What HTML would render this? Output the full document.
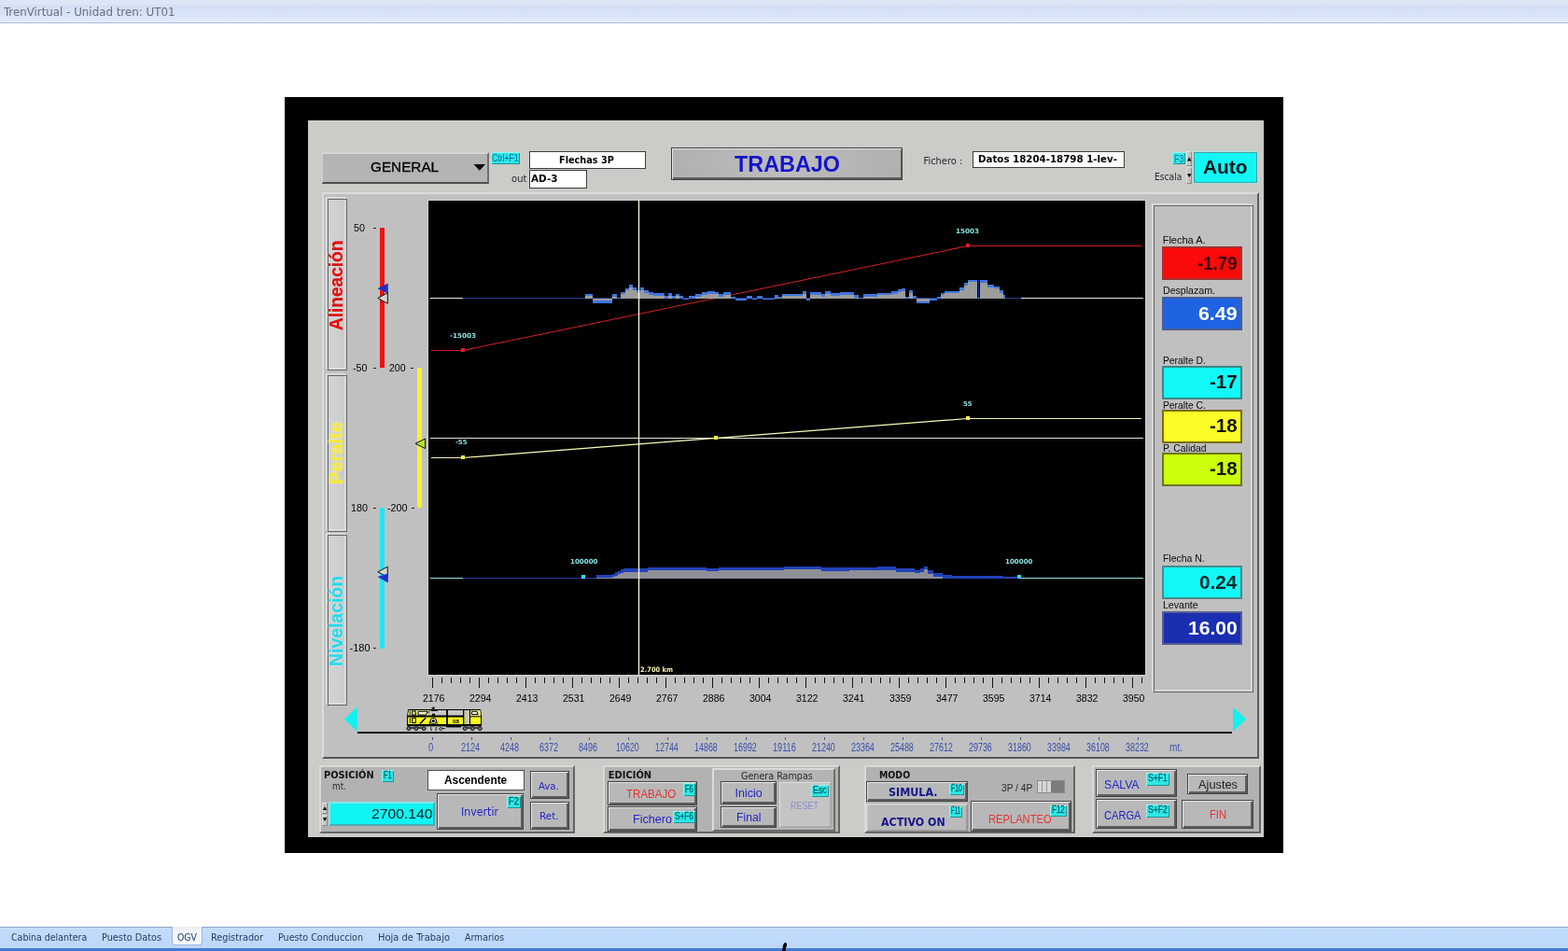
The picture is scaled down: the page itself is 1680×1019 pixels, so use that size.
<!DOCTYPE html>
<html lang="es">
<head>
<meta charset="utf-8">
<title>TrenVirtual - Unidad tren: UT01</title>
<style>
*{box-sizing:border-box;margin:0;padding:0}
html,body{width:1680px;height:1019px;overflow:hidden;background:#fff}
body{position:relative;font-family:"Liberation Sans",sans-serif;font-size:12px;color:#000}
#root{position:absolute;left:0;top:0;width:1680px;height:1019px;will-change:transform}
.a{position:absolute}
.t{position:absolute;white-space:nowrap;line-height:1;transform-origin:0 50%}
#titlebar{left:0;top:0;width:1680px;height:25px;background:linear-gradient(#dbe5f5 0,#dde7f6 18%,#d3e0f4 24%,#d6e2f5 60%,#e2ebfa 92%,#e6eefb 100%);border-bottom:1px solid #a9bde2}
#taskbar{left:0;top:993px;width:1680px;height:26px;background:linear-gradient(#c3dcfd,#bcd7fa);border-top:1px solid #8da6c9;border-bottom:3px solid #427bd4}
#blk{left:305px;top:104px;width:1070px;height:810px;background:#000}
#panel{left:330px;top:129px;width:1024px;height:768px;background:#c9ccc7}
#frame{left:345px;top:206px;width:1004px;height:607px;background:#c0c0c0;border-top:2px solid #dadeda;border-left:2px solid #dadeda;border-right:2px solid #5c5e5a;border-bottom:2px solid #565856}
#chart{left:459px;top:215px;width:768px;height:508px;background:#000;overflow:hidden;box-shadow:0 0 0 1px #d2d2d2}
.btn{position:absolute;background:#b8b8b8;border:1px solid #444;box-shadow:inset 1px 1px 0 #e6e6e6,inset -2px -2px 0 #5e5e5e}
.grp{position:absolute;background:#b2b2b2;border-top:2px solid #d8dad8;border-left:2px solid #d8dad8;border-right:2px solid #646664;border-bottom:2px solid #646664}
.tag{position:absolute;background:#2ee8e4;box-shadow:inset 1px 1px 0 #96f2f2,inset -1px -1px 0 #22939a}
.wbox{position:absolute;background:#fff;border:1px solid #3c3c3c}
.vt{position:absolute;white-space:nowrap;line-height:1;font-weight:bold;transform-origin:0 0;-webkit-text-stroke:0.35px currentColor;text-shadow:0 0 2px rgba(255,255,255,.75),0 0 1px rgba(255,255,255,.6)}
</style>
</head>
<body>
<div id="root">
<div class="a" id="titlebar"></div>
<span class="t" style="left:4px;top:6.3px;font-size:13px;font-family:'DejaVu Sans Condensed','Liberation Sans',sans-serif;color:#6a707c;transform:scaleX(1.013);">TrenVirtual - Unidad tren: UT01</span>
<div class="a" id="blk"></div>
<div class="a" id="panel"></div>
<div class="a" id="frame"></div>
<div class="a" id="chart"></div>
<div class="a" id="taskbar"></div>
<div class="a" style="left:184px;top:993px;width:33px;height:20px;background:linear-gradient(#ebebeb,#f4f7fc 30%,#f7faff);border:1px solid #9fb6d8;border-top:none;border-radius:0 0 4px 4px"></div>
<span class="t" style="left:12px;top:999.12px;font-size:10.5px;font-family:'DejaVu Sans Condensed','Liberation Sans',sans-serif;color:#1e3a5f;">Cabina delantera</span>
<span class="t" style="left:109px;top:999.12px;font-size:10.5px;font-family:'DejaVu Sans Condensed','Liberation Sans',sans-serif;color:#1e3a5f;transform:scaleX(1.029);">Puesto Datos</span>
<span class="t" style="left:190px;top:999.12px;font-size:10.5px;font-family:'DejaVu Sans Condensed','Liberation Sans',sans-serif;color:#1e3a5f;transform:scaleX(0.990);">OGV</span>
<span class="t" style="left:226px;top:999.12px;font-size:10.5px;font-family:'DejaVu Sans Condensed','Liberation Sans',sans-serif;color:#1e3a5f;transform:scaleX(1.028);">Registrador</span>
<span class="t" style="left:298px;top:999.12px;font-size:10.5px;font-family:'DejaVu Sans Condensed','Liberation Sans',sans-serif;color:#1e3a5f;transform:scaleX(1.013);">Puesto Conduccion</span>
<span class="t" style="left:405px;top:999.12px;font-size:10.5px;font-family:'DejaVu Sans Condensed','Liberation Sans',sans-serif;color:#1e3a5f;transform:scaleX(1.052);">Hoja de Trabajo</span>
<span class="t" style="left:498px;top:999.12px;font-size:10.5px;font-family:'DejaVu Sans Condensed','Liberation Sans',sans-serif;color:#1e3a5f;transform:scaleX(0.992);">Armarios</span>
<div class="a" style="left:345px;top:162.5px;width:179px;height:34.5px;background:#b4b4b4;border-top:2px solid #d6d8d6;border-left:1px solid #d0d2d0;border-right:2px solid #707070;border-bottom:2px solid #4e4e4e"></div>
<span class="t" style="left:397px;top:171.35px;font-size:15.3px;-webkit-text-stroke:0.3px #000;">GENERAL</span>
<svg class="a" style="left:506px;top:175px" width="16" height="9" viewBox="0 0 16 9"><path d="M1.5 1h12.5l-6.2 6.8z" fill="#000"/></svg>
<div class="tag" style="left:526px;top:163px;width:31px;height:13px;"></div>
<span class="t" style="left:527.3px;top:164.29px;font-size:11px;color:#0c64a8;transform:scaleX(0.786);">Ctrl+F1</span>
<div class="wbox" style="left:567px;top:162px;width:125px;height:19px;"></div>
<span class="t" style="left:599.3px;top:165.99px;font-size:11px;font-family:'DejaVu Sans Condensed','Liberation Sans',sans-serif;font-weight:bold;transform:scaleX(0.981);">Flechas 3P</span>
<span class="t" style="left:547.5px;top:185.69px;font-size:11px;font-family:'DejaVu Sans Condensed','Liberation Sans',sans-serif;color:#2a2a2a;transform:scaleX(1.017);">out</span>
<div class="wbox" style="left:567px;top:182px;width:62px;height:20px;"></div>
<span class="t" style="left:569px;top:186.19px;font-size:11px;font-family:'DejaVu Sans Condensed','Liberation Sans',sans-serif;font-weight:bold;transform:scaleX(1.053);">AD-3</span>
<div class="a" style="left:719px;top:158px;width:248px;height:35px;background:linear-gradient(90deg,#b0b0b0,#bdbdbd 50%,#b0b0b0);border:1px solid #3e3e3e;box-shadow:inset 1px 1px 0 #e8e8e8,inset -1px -2px 0 #606060"></div>
<span class="t" style="left:786.5px;top:163.56px;font-size:24.5px;font-weight:bold;color:#1414cc;transform:scaleX(0.954);">TRABAJO</span>
<span class="t" style="left:989.5px;top:166.69px;font-size:11px;font-family:'DejaVu Sans Condensed','Liberation Sans',sans-serif;color:#2a2a2a;">Fichero :</span>
<div class="wbox" style="left:1042px;top:162px;width:163px;height:18px;"></div>
<span class="t" style="left:1047.5px;top:165.19px;font-size:11px;font-family:'DejaVu Sans Condensed','Liberation Sans',sans-serif;font-weight:bold;transform:scaleX(1.036);">Datos 18204-18798 1-lev-</span>
<div class="tag" style="left:1256px;top:163px;width:14px;height:13px;"></div>
<span class="t" style="left:1257.6px;top:164.71px;font-size:10.5px;color:#1472b0;transform:scaleX(0.864);">F3</span>
<span class="t" style="left:1236.9px;top:183.69px;font-size:11px;font-family:'DejaVu Sans Condensed','Liberation Sans',sans-serif;color:#2a2a2a;transform:scaleX(0.926);">Escala</span>
<div class="a" style="left:1271px;top:162px;width:6px;height:16px;background:#c4c4c4;border:1px solid #8a8a8a;border-top-color:#e0e0e0;border-left-color:#e0e0e0"></div>
<div class="a" style="left:1271px;top:179px;width:6px;height:18px;background:#c4c4c4;border:1px solid #8a8a8a;border-top-color:#e0e0e0;border-left-color:#e0e0e0"></div>
<svg class="a" style="left:1271px;top:162px" width="7" height="35" viewBox="0 0 7 35"><path d="M0.9 10.4h4.6l-2.3-4.2z M0.9 24.2h4.6l-2.3 3.8z" fill="#000"/></svg>
<div class="a" style="left:1278px;top:162px;width:70px;height:35px;background:#12f6f6;box-shadow:inset 0 0 0 1px #a4e2e2,inset 0 0 0 2px #4a9ea0"></div>
<span class="t" style="left:1288.7px;top:168.8px;font-size:20.2px;font-weight:bold;color:#04181c;transform:scaleX(1.035);">Auto</span>
<div class="a" style="left:351px;top:213px;width:21px;height:184px;background:linear-gradient(90deg,#d4d4d4,#cacaca)"></div>
<div class="a" style="left:349px;top:211px;width:21px;height:184px;border:1px solid #e0e0e0"></div>
<div class="a" style="left:350px;top:212px;width:21px;height:184px;border:1px solid rgba(226,226,226,.45)"></div>
<div class="a" style="left:351px;top:213px;width:21px;height:184px;border:1px solid #666"></div>
<div class="a" style="left:351px;top:402px;width:21px;height:168px;background:linear-gradient(90deg,#d4d4d4,#cacaca)"></div>
<div class="a" style="left:349px;top:400px;width:21px;height:168px;border:1px solid #e0e0e0"></div>
<div class="a" style="left:350px;top:401px;width:21px;height:168px;border:1px solid rgba(226,226,226,.45)"></div>
<div class="a" style="left:351px;top:402px;width:21px;height:168px;border:1px solid #666"></div>
<div class="a" style="left:351px;top:573px;width:21px;height:183px;background:linear-gradient(90deg,#d4d4d4,#cacaca)"></div>
<div class="a" style="left:349px;top:571px;width:21px;height:183px;border:1px solid #e0e0e0"></div>
<div class="a" style="left:350px;top:572px;width:21px;height:183px;border:1px solid rgba(226,226,226,.45)"></div>
<div class="a" style="left:351px;top:573px;width:21px;height:183px;border:1px solid #666"></div>
<span class="vt" style="left:350.3px;top:354.3px;font-size:20px;color:#dc1212;transform:rotate(-90deg) scaleX(0.952)">Alineación</span>
<span class="vt" style="left:350.3px;top:519.3px;font-size:20px;color:#f4e83c;transform:rotate(-90deg) scaleX(1.001)">Peralte</span>
<span class="vt" style="left:350.3px;top:714.3px;font-size:20px;color:#2cd8ea;transform:rotate(-90deg) scaleX(0.970)">Nivelación</span>
<span class="t" style="left:379.4px;top:238.69px;font-size:11px;transform:scaleX(0.980);">50</span>
<span class="t" style="left:377.5px;top:388.69px;font-size:11px;transform:scaleX(0.974);">-50</span>
<span class="t" style="left:416.75px;top:388.69px;font-size:11px;transform:scaleX(0.959);">200</span>
<span class="t" style="left:376.2px;top:538.69px;font-size:11px;transform:scaleX(0.980);">180</span>
<span class="t" style="left:414.5px;top:538.69px;font-size:11px;transform:scaleX(0.976);">-200</span>
<span class="t" style="left:374.5px;top:688.69px;font-size:11px;">-180</span>
<div class="a" style="left:400px;top:244px;width:3px;height:1px;background:#222"></div>
<div class="a" style="left:400px;top:394px;width:3px;height:1px;background:#222"></div>
<div class="a" style="left:440px;top:394px;width:3px;height:1px;background:#222"></div>
<div class="a" style="left:400px;top:544px;width:3px;height:1px;background:#222"></div>
<div class="a" style="left:440.5px;top:544px;width:3px;height:1px;background:#222"></div>
<div class="a" style="left:400px;top:694px;width:3px;height:1px;background:#222"></div>
<div class="a" style="left:407px;top:244px;width:5px;height:150px;background:#ee1212"></div>
<div class="a" style="left:446.5px;top:394px;width:5.5px;height:150px;background:#f6f230"></div>
<div class="a" style="left:407px;top:544px;width:5px;height:151px;background:#1fe6f6"></div>
<svg class="a" style="left:400px;top:300px" width="60" height="330" viewBox="400 300 60 330"><path d="M404.5 309.3L415.8 303.6V314.6z" fill="#1f30c8"/><path d="M404.8 319.5L415.3 313.8V325.2z" fill="#d4d4d4" stroke="#111" stroke-width="1"/><path d="M445 475.3L455.7 470V480.6z" fill="#b4e03a" stroke="#111" stroke-width="1"/><path d="M404.8 612.8L415.3 607.2V618.4z" fill="#d4d4d4" stroke="#111" stroke-width="1"/><path d="M404.5 618L415.8 614.5V624.5z" fill="#1f30c8"/></svg>
<svg class="a" style="left:459px;top:215px" width="768" height="508" viewBox="459 215 768 508" shape-rendering="crispEdges"><path d="M496 375.5L1037 263.5" fill="none" stroke="#d82222" stroke-width="1.05" shape-rendering="auto"/><path d="M462 375.5H496M1037 263.5H1223" fill="none" stroke="#d81818" stroke-width="1"/><path d="M461 319.5H496" stroke="#e6e6e0" stroke-width="1"/><path d="M496 319.5H1094" stroke="#2a3c96" stroke-width="1"/><path d="M1094 319.5H1225" stroke="#e6e6e0" stroke-width="1"/><path d="M627 319.5V314.5H635V324.5H656V315H661V318.5H665V312.5H670V308.5H674V305H678V308H682V311H686V308H690V311H695V313H700V314H712V317H716V314H720V317H724V314.5H728V317H732V321H738V317H745V315H752V313H758V312H766V312.5H770V315H775V313H783V318H788V321.5H800V317H806V320.5H811V317H817V321H830V316H834V318H838V314.5H860V312H864V322H868V313H880V315H884V312H890V314H900V313H915V316H920V319H925V315H940V313.5H955V312H962V310H966V309H970V318H974V311H978V317H982V325H996V321.5H1004V317.5H1008V313.5H1012V311.5H1028V308H1033V303H1037V299.5H1047V319H1050V300H1058V305H1065V306.5H1071V311H1075V316H1077V319.5Z" fill="#4076de"/><path d="M627 319.5V317.0H635V322.0H656V317.5H661V319.5H665V315.0H670V311.0H674V307.5H678V310.5H682V313.5H686V310.5H690V313.5H695V315.5H700V316.5H712V319.5H716V316.5H720V319.5H724V317.0H728V319.5H732V319.5H738V319.5H745V317.5H752V315.5H758V314.5H766V315.0H770V317.5H775V315.5H783V319.5H788V319.5H800V319.5H806V319.5H811V319.5H817V319.5H830V318.5H834V319.5H838V317.0H860V314.5H864V319.5H868V315.5H880V317.5H884V314.5H890V316.5H900V315.5H915V318.5H920V319.5H925V317.5H940V316.0H955V314.5H962V312.5H966V311.5H970V319.5H974V313.5H978V319.5H982V322.5H996V319.5H1004V319.5H1008V316.0H1012V314.0H1028V310.5H1033V305.5H1037V302.0H1047V319.5H1050V302.5H1058V307.5H1065V309.0H1071V313.5H1075V318.5H1077V319.5Z" fill="#9c9c9c"/><path d="M1048.5 300V319" stroke="#1c3aa0" stroke-width="1"/><rect x="494" y="373" width="4" height="4" fill="#e01c2c"/><rect x="1035" y="261" width="4" height="4" fill="#e01c2c"/><path d="M461 469.5H1225" stroke="#e8e8dc" stroke-width="1"/><path d="M496 490.5L1037 448.5" fill="none" stroke="#fcfcb8" stroke-width="1.25" shape-rendering="auto"/><path d="M462 490.5H496M1037 448.5H1223" fill="none" stroke="#f6f6b0" stroke-width="1"/><rect x="494" y="488" width="4" height="4" fill="#f0f040"/><rect x="765" y="467" width="4" height="4" fill="#f0f040"/><rect x="1035" y="446" width="4" height="4" fill="#f0f060"/><path d="M461 619.5H496" stroke="#8ee6e6" stroke-width="1"/><path d="M496 619.5H1092" stroke="#2338a8" stroke-width="1"/><path d="M1092 619.5H1225" stroke="#8ee6e6" stroke-width="1"/><path d="M625 620V618.5H639V615.8H656V614.5H659V613H662V611.5H665V610.3H668V609H672V609.4H694V607.6H720V607.8H757V608.6H770V607.6H800V607.8H840V606.8H880V608H910V607.6H940V607H960V609H980V610.8H986V609.4H990V606.6H994V611.4H1000V614.4H1010V616H1020V616.6H1075V618.4H1092V620Z" fill="#2242b8"/><path d="M625 619.5V619.5H639V619.4H656V618.1H659V616.6H662V615.1H665V613.9H668V612.6H672V613.0H694V611.2H720V611.4H757V612.2H770V611.2H800V611.4H840V610.4H880V611.6H910V611.2H940V610.6H960V612.6H980V614.4H986V613.0H990V610.2H994V615.0H1000V618.0H1010V619.5H1020V619.5H1075V619.5H1092V619.5Z" fill="#8e8e96"/><rect x="623" y="616" width="4" height="4" fill="#40d8f0"/><rect x="1090" y="616" width="4" height="4" fill="#30d8e8"/><path d="M684.5 215V723" stroke="#fbfbe6" stroke-width="1.3" shape-rendering="auto"/></svg>
<span class="t" style="left:481.5px;top:357.08px;font-size:7px;font-family:'DejaVu Sans','Liberation Sans',sans-serif;font-weight:bold;color:#8ce0e0;transform:scaleX(1.027);">-15003</span>
<span class="t" style="left:1024px;top:244.68px;font-size:7px;font-family:'DejaVu Sans','Liberation Sans',sans-serif;font-weight:bold;color:#8ce0e0;transform:scaleX(1.026);">15003</span>
<span class="t" style="left:488.25px;top:471.08px;font-size:7px;font-family:'DejaVu Sans','Liberation Sans',sans-serif;font-weight:bold;color:#8ce0e0;transform:scaleX(0.988);">-55</span>
<span class="t" style="left:1031.75px;top:430.08px;font-size:7px;font-family:'DejaVu Sans','Liberation Sans',sans-serif;font-weight:bold;color:#8ce0e0;transform:scaleX(0.974);">55</span>
<span class="t" style="left:610.75px;top:598.58px;font-size:7px;font-family:'DejaVu Sans','Liberation Sans',sans-serif;font-weight:bold;color:#8ce0e0;transform:scaleX(1.009);">100000</span>
<span class="t" style="left:1076.75px;top:598.58px;font-size:7px;font-family:'DejaVu Sans','Liberation Sans',sans-serif;font-weight:bold;color:#8ce0e0;transform:scaleX(1.009);">100000</span>
<span class="t" style="left:686px;top:713.95px;font-size:7.5px;font-family:'DejaVu Sans','Liberation Sans',sans-serif;font-weight:bold;color:#f2f0b0;transform:scaleX(0.894);">2.700 km</span>
<div class="a" style="left:463px;top:726px;width:751px;height:11px;background:repeating-linear-gradient(90deg,#111 0,#111 1px,transparent 1px,transparent 50px)"></div>
<div class="a" style="left:463px;top:726px;width:761px;height:6px;background:repeating-linear-gradient(90deg,#111 0,#111 1px,transparent 1px,transparent 10px)"></div>
<span class="t" style="left:452.75px;top:742.69px;font-size:11px;transform:scaleX(0.960);">2176</span>
<span class="t" style="left:502.75px;top:742.69px;font-size:11px;transform:scaleX(0.960);">2294</span>
<span class="t" style="left:552.75px;top:742.69px;font-size:11px;transform:scaleX(0.960);">2413</span>
<span class="t" style="left:602.75px;top:742.69px;font-size:11px;transform:scaleX(0.960);">2531</span>
<span class="t" style="left:652.75px;top:742.69px;font-size:11px;transform:scaleX(0.960);">2649</span>
<span class="t" style="left:702.75px;top:742.69px;font-size:11px;transform:scaleX(0.960);">2767</span>
<span class="t" style="left:752.75px;top:742.69px;font-size:11px;transform:scaleX(0.960);">2886</span>
<span class="t" style="left:802.75px;top:742.69px;font-size:11px;transform:scaleX(0.960);">3004</span>
<span class="t" style="left:852.75px;top:742.69px;font-size:11px;transform:scaleX(0.960);">3122</span>
<span class="t" style="left:902.75px;top:742.69px;font-size:11px;transform:scaleX(0.960);">3241</span>
<span class="t" style="left:952.75px;top:742.69px;font-size:11px;transform:scaleX(0.960);">3359</span>
<span class="t" style="left:1002.75px;top:742.69px;font-size:11px;transform:scaleX(0.960);">3477</span>
<span class="t" style="left:1052.75px;top:742.69px;font-size:11px;transform:scaleX(0.960);">3595</span>
<span class="t" style="left:1102.75px;top:742.69px;font-size:11px;transform:scaleX(0.960);">3714</span>
<span class="t" style="left:1152.75px;top:742.69px;font-size:11px;transform:scaleX(0.960);">3832</span>
<span class="t" style="left:1202.75px;top:742.69px;font-size:11px;transform:scaleX(0.960);">3950</span>
<svg class="a" style="left:434px;top:756px" width="84" height="28" viewBox="434 756 84 28"><path d="M437.6 760.5H514.6L515.6 767.5V776.5H436.6V767.5z" fill="#f8f820" stroke="#000" stroke-width="1"/><path d="M438 761H459.5V767H437.2zM504 761H514.3L515 767H504z" fill="#ecec9c"/><rect x="459.5" y="761" width="19" height="6.2" fill="#c6c6c6"/><rect x="480" y="761" width="16.5" height="6.2" fill="#c6c6c6"/><rect x="497.5" y="761" width="5.7" height="15.3" fill="#c6c6c6"/><path d="M436.6 767.5H497" stroke="#000" stroke-width="1.8"/><path d="M503.5 767.8H515.6" stroke="#000" stroke-width="1"/><path d="M479 760V778" stroke="#000" stroke-width="1.8"/><path d="M496.7 760.5V776.5" stroke="#000" stroke-width="1.3"/><path d="M503.5 760.5V776.5" stroke="#000" stroke-width="1"/><rect x="441.7" y="762" width="3.6" height="4" fill="#ecec9c" stroke="#000" stroke-width="1"/><rect x="441.7" y="769.3" width="3.6" height="5.2" fill="#f8f820" stroke="#000" stroke-width="1"/><path d="M439.3 761.5V766.5M439.3 769.3V775" stroke="#000" stroke-width="0.9"/><path d="M448 762.3H458.3L456.3 766H448z" fill="#f4f4d0" stroke="#000" stroke-width="1"/><path d="M458.6 764.6L460.6 761.6" stroke="#000" stroke-width="0.9"/><path d="M505.4 762.3H511L512.2 765.6H505.4z" fill="#f4f4d0" stroke="#000" stroke-width="1"/><path d="M450 775.6L456 769.2" stroke="#000" stroke-width="1.5"/><path d="M462 760.6H468.8V762H462zM462.4 758.2H466V759.3H462.4zM463.6 757.6H464.9V761H463.6zM463 764.8H466V767.5H463z" fill="#000"/><circle cx="464.3" cy="772.5" r="3.6" fill="#000"/><circle cx="464.3" cy="772.5" r="2.7" fill="#e2e2d2"/><circle cx="464.3" cy="772.5" r="1.5" fill="#000"/><path d="M460 776L461.2 772.5M468.6 776L467.4 772.5" stroke="#000" stroke-width="0.9"/><rect x="436.2" y="776" width="79.8" height="2.3" fill="#000"/><rect x="478" y="778" width="16" height="1.4" fill="#000"/><circle cx="437.9" cy="780.6" r="1.9" fill="#7c7c84" stroke="#000" stroke-width="1"/><circle cx="445.9" cy="780.6" r="1.9" fill="#7c7c84" stroke="#000" stroke-width="1"/><circle cx="454.2" cy="780.6" r="1.9" fill="#7c7c84" stroke="#000" stroke-width="1"/><circle cx="498.2" cy="780.6" r="1.9" fill="#7c7c84" stroke="#000" stroke-width="1"/><circle cx="506.3" cy="780.6" r="1.9" fill="#7c7c84" stroke="#000" stroke-width="1"/><circle cx="514.3" cy="780.6" r="1.9" fill="#7c7c84" stroke="#000" stroke-width="1"/><path d="M439.8 780H444M447.8 780H452.4M500 780H504.4M508.2 780H512.4" stroke="#1a1a1a" stroke-width="1.6"/><circle cx="472.3" cy="781" r="1.5" fill="#bbb" stroke="#000" stroke-width="0.8"/><path d="M461.8 779V782.3H463M467.3 779V782.3H466.2M474 780.5H477" fill="none" stroke="#000" stroke-width="0.8"/><text x="485.1" y="774.7" font-family="Liberation Sans,sans-serif" font-size="5.8" font-weight="bold" textLength="6.8" lengthAdjust="spacingAndGlyphs" fill="#000">08</text></svg>
<div class="a" style="left:383px;top:784px;width:937px;height:2px;background:#000"></div>
<svg class="a" style="left:368px;top:757px" width="16" height="28" viewBox="0 0 16 28"><path d="M0.8 13.6L15 0.5V27z" fill="#14f0f0"/></svg>
<svg class="a" style="left:1320px;top:757px" width="16" height="28" viewBox="0 0 16 28"><path d="M15.2 13.6L1 0.5V27z" fill="#14f0f0"/></svg>
<div class="a" style="left:463px;top:790px;width:757px;height:2.5px;background:repeating-linear-gradient(90deg,#4a5688 0,#4a5688 1px,transparent 1px,transparent 42px)"></div>
<span class="t" style="left:459.4px;top:794.64px;font-size:12px;color:#3a50aa;transform:scaleX(0.778);">0</span>
<span class="t" style="left:494.35px;top:794.64px;font-size:12px;color:#3a50aa;transform:scaleX(0.753);">2124</span>
<span class="t" style="left:536.35px;top:794.64px;font-size:12px;color:#3a50aa;transform:scaleX(0.753);">4248</span>
<span class="t" style="left:578.35px;top:794.64px;font-size:12px;color:#3a50aa;transform:scaleX(0.753);">6372</span>
<span class="t" style="left:620.35px;top:794.64px;font-size:12px;color:#3a50aa;transform:scaleX(0.753);">8496</span>
<span class="t" style="left:660px;top:794.64px;font-size:12px;color:#3a50aa;transform:scaleX(0.743);">10620</span>
<span class="t" style="left:702px;top:794.64px;font-size:12px;color:#3a50aa;transform:scaleX(0.743);">12744</span>
<span class="t" style="left:744px;top:794.64px;font-size:12px;color:#3a50aa;transform:scaleX(0.743);">14868</span>
<span class="t" style="left:786px;top:794.64px;font-size:12px;color:#3a50aa;transform:scaleX(0.743);">16992</span>
<span class="t" style="left:828px;top:794.64px;font-size:12px;color:#3a50aa;transform:scaleX(0.763);">19116</span>
<span class="t" style="left:870px;top:794.64px;font-size:12px;color:#3a50aa;transform:scaleX(0.743);">21240</span>
<span class="t" style="left:912px;top:794.64px;font-size:12px;color:#3a50aa;transform:scaleX(0.743);">23364</span>
<span class="t" style="left:954px;top:794.64px;font-size:12px;color:#3a50aa;transform:scaleX(0.743);">25488</span>
<span class="t" style="left:996px;top:794.64px;font-size:12px;color:#3a50aa;transform:scaleX(0.743);">27612</span>
<span class="t" style="left:1038px;top:794.64px;font-size:12px;color:#3a50aa;transform:scaleX(0.743);">29736</span>
<span class="t" style="left:1080px;top:794.64px;font-size:12px;color:#3a50aa;transform:scaleX(0.743);">31860</span>
<span class="t" style="left:1122px;top:794.64px;font-size:12px;color:#3a50aa;transform:scaleX(0.743);">33984</span>
<span class="t" style="left:1164px;top:794.64px;font-size:12px;color:#3a50aa;transform:scaleX(0.743);">36108</span>
<span class="t" style="left:1206px;top:794.64px;font-size:12px;color:#3a50aa;transform:scaleX(0.743);">38232</span>
<span class="t" style="left:1253.3px;top:794.64px;font-size:12px;color:#3a50aa;transform:scaleX(0.840);">mt.</span>
<div class="a" style="left:1236px;top:220px;width:107px;height:522px;background:#c0c0c0"></div>
<div class="a" style="left:1234px;top:218px;width:107px;height:522px;border:1px solid #e0e0e0"></div>
<div class="a" style="left:1235px;top:219px;width:107px;height:522px;border:1px solid rgba(226,226,226,.45)"></div>
<div class="a" style="left:1236px;top:220px;width:107px;height:522px;border:1px solid #666"></div>
<span class="t" style="left:1245.7px;top:251.69px;font-size:11px;color:#0a0a0a;">Flecha A.</span>
<div class="a" style="left:1245px;top:264px;width:86px;height:36px;background:#fb0a0a;border:2px solid #a43232"></div>
<span class="t" style="left:1282.7px;top:272.91px;font-size:19.6px;font-weight:bold;color:#3a0404;transform:scaleX(0.954);">-1.79</span>
<span class="t" style="left:1245.7px;top:305.69px;font-size:11px;color:#0a0a0a;transform:scaleX(0.964);">Desplazam.</span>
<div class="a" style="left:1245px;top:318px;width:86px;height:36px;background:#1f62e2;border:2px solid #4a5c8e"></div>
<span class="t" style="left:1284.2px;top:326.61px;font-size:19.6px;font-weight:bold;color:#fff;transform:scaleX(1.088);">6.49</span>
<span class="t" style="left:1245.7px;top:381.49px;font-size:11px;color:#0a0a0a;transform:scaleX(0.936);">Peralte D.</span>
<div class="a" style="left:1245px;top:392px;width:86px;height:36px;background:#12f8f8;border:2px solid #3e8484"></div>
<span class="t" style="left:1295.7px;top:400.11px;font-size:19.6px;font-weight:bold;color:#0a1616;transform:scaleX(1.045);">-17</span>
<span class="t" style="left:1245.7px;top:428.69px;font-size:11px;color:#0a0a0a;transform:scaleX(0.936);">Peralte C.</span>
<div class="a" style="left:1245px;top:439px;width:86px;height:36px;background:#fcfc26;border:2px solid #7c6c18"></div>
<span class="t" style="left:1295.7px;top:447.11px;font-size:19.6px;font-weight:bold;color:#141404;transform:scaleX(1.045);">-18</span>
<span class="t" style="left:1245.7px;top:475.19px;font-size:11px;color:#0a0a0a;transform:scaleX(0.942);">P. Calidad</span>
<div class="a" style="left:1245px;top:485px;width:86px;height:36px;background:#ccff0c;border:2px solid #6c7620"></div>
<span class="t" style="left:1295.7px;top:493.21px;font-size:19.6px;font-weight:bold;color:#141404;transform:scaleX(1.045);">-18</span>
<span class="t" style="left:1245.7px;top:593.49px;font-size:11px;color:#0a0a0a;transform:scaleX(0.947);">Flecha N.</span>
<div class="a" style="left:1245px;top:606px;width:86px;height:36px;background:#12f8f8;border:2px solid #4a8a8c"></div>
<span class="t" style="left:1284.8px;top:614.71px;font-size:19.6px;font-weight:bold;color:#06282a;transform:scaleX(1.059);">0.24</span>
<span class="t" style="left:1245.7px;top:642.69px;font-size:11px;color:#0a0a0a;transform:scaleX(0.960);">Levante</span>
<div class="a" style="left:1245px;top:655px;width:86px;height:36px;background:#1a2eb2;border:2px solid #565e92"></div>
<span class="t" style="left:1272.7px;top:663.51px;font-size:19.6px;font-weight:bold;color:#fff;transform:scaleX(1.077);">16.00</span>
<div class="grp" style="left:342px;top:820px;width:274px;height:73px;"></div>
<span class="t" style="left:346.6px;top:825.29px;font-size:11px;font-family:'DejaVu Sans Condensed','Liberation Sans',sans-serif;font-weight:bold;color:#141414;transform:scaleX(0.991);">POSICIÓN</span>
<div class="tag" style="left:409px;top:825px;width:13px;height:13px;"></div>
<span class="t" style="left:410.8px;top:826.24px;font-size:10px;color:#05646e;transform:scaleX(0.754);-webkit-text-stroke:0.3px #05646e;">F1</span>
<span class="t" style="left:355.5px;top:837.39px;font-size:11px;font-family:'DejaVu Sans Condensed','Liberation Sans',sans-serif;color:#2a2a2a;transform:scaleX(0.900);">mt.</span>
<div class="wbox" style="left:458px;top:825px;width:104px;height:22px;border-color:#505050"></div>
<span class="t" style="left:476px;top:830.34px;font-size:12px;font-weight:bold;transform:scaleX(0.988);">Ascendente</span>
<div class="btn" style="left:568px;top:826px;width:42px;height:30px;"></div>
<span class="t" style="left:576.9px;top:837.19px;font-size:11px;font-family:'DejaVu Sans Condensed','Liberation Sans',sans-serif;color:#2424c4;transform:scaleX(1.029);">Ava.</span>
<div class="btn" style="left:568px;top:859px;width:42px;height:30px;"></div>
<span class="t" style="left:577.5px;top:869.09px;font-size:11px;font-family:'DejaVu Sans Condensed','Liberation Sans',sans-serif;color:#2424c4;transform:scaleX(1.056);">Ret.</span>
<div class="btn" style="left:468px;top:850px;width:93px;height:39px;"></div>
<span class="t" style="left:493.7px;top:864.12px;font-size:12.5px;font-family:'DejaVu Sans Condensed','Liberation Sans',sans-serif;color:#2424c4;transform:scaleX(0.980);">Invertir</span>
<div class="tag" style="left:543px;top:853px;width:15px;height:13px;"></div>
<span class="t" style="left:544.8px;top:854.24px;font-size:10px;color:#05646e;transform:scaleX(0.925);-webkit-text-stroke:0.3px #05646e;">F2</span>
<div class="a" style="left:345px;top:860px;width:6px;height:12px;background:#c6c6c6;border:1px solid #8a8a8a;border-top-color:#e4e4e4;border-left-color:#e4e4e4"></div>
<div class="a" style="left:345px;top:873px;width:6px;height:12px;background:#c6c6c6;border:1px solid #8a8a8a;border-top-color:#e4e4e4;border-left-color:#e4e4e4"></div>
<svg class="a" style="left:345px;top:860px" width="6" height="25" viewBox="0 0 6 25"><path d="M0.8 8h4.4l-2.2-3.8z M0.8 16.2h4.4l-2.2 3.8z" fill="#000"/></svg>
<div class="a" style="left:352px;top:859px;width:114px;height:26px;background:#10f4f4;border:2px solid #48aeb2;border-top-color:#86e4e4;border-left-color:#86e4e4"></div>
<span class="t" style="left:397.6px;top:865.14px;font-size:14.6px;color:#061c1c;transform:scaleX(1.078);">2700.140</span>
<div class="grp" style="left:646px;top:820px;width:254px;height:73px;"></div>
<span class="t" style="left:651.8px;top:825.29px;font-size:11px;font-family:'DejaVu Sans Condensed','Liberation Sans',sans-serif;font-weight:bold;color:#141414;">EDICIÓN</span>
<div class="btn" style="left:651px;top:837px;width:96px;height:26px;"></div>
<span class="t" style="left:671.3px;top:844.92px;font-size:12.5px;color:#e63434;transform:scaleX(0.923);">TRABAJO</span>
<div class="tag" style="left:732px;top:839px;width:13px;height:14px;"></div>
<span class="t" style="left:733.8px;top:841.24px;font-size:10px;color:#05646e;transform:scaleX(0.754);-webkit-text-stroke:0.3px #05646e;">F6</span>
<div class="btn" style="left:651px;top:864px;width:96px;height:27px;"></div>
<span class="t" style="left:677.5px;top:872.02px;font-size:12.5px;color:#2424c4;transform:scaleX(1.007);">Fichero</span>
<div class="tag" style="left:721px;top:869px;width:24px;height:13px;"></div>
<span class="t" style="left:722.8px;top:870.24px;font-size:10px;color:#05646e;transform:scaleX(0.819);-webkit-text-stroke:0.3px #05646e;">S+F6</span>
<div class="a" style="left:763px;top:823px;width:132px;height:68px;background:#b4b4b4;border:2px solid #6c6e6c;border-top-color:#dadcda;border-left-color:#dadcda"></div>
<span class="t" style="left:793.8px;top:825.89px;font-size:11px;font-family:'DejaVu Sans Condensed','Liberation Sans',sans-serif;color:#2a2a2a;transform:scaleX(0.969);">Genera Rampas</span>
<div class="btn" style="left:772px;top:837px;width:60px;height:25px;"></div>
<span class="t" style="left:787.6px;top:843.52px;font-size:12.5px;color:#2424c4;">Inicio</span>
<div class="btn" style="left:772px;top:864px;width:60px;height:23px;"></div>
<span class="t" style="left:788.6px;top:869.62px;font-size:12.5px;color:#2424c4;transform:scaleX(0.974);">Final</span>
<div class="a" style="left:835px;top:838px;width:56px;height:49px;background:#c4c4c4;border:1px solid #a4a4a4;border-top-color:#dedede;border-left-color:#dedede;box-shadow:inset -1px -1px 0 #b0b0b0"></div>
<span class="t" style="left:846.9px;top:857.79px;font-size:11px;color:#8c8cd2;transform:scaleX(0.818);">RESET</span>
<div class="tag" style="left:869px;top:841px;width:19px;height:13px;"></div>
<span class="t" style="left:870.8px;top:842.24px;font-size:10px;color:#05646e;transform:scaleX(0.888);-webkit-text-stroke:0.3px #05646e;">Esc</span>
<div class="grp" style="left:926px;top:820px;width:226px;height:73px;"></div>
<span class="t" style="left:941.9px;top:824.99px;font-size:11px;font-family:'DejaVu Sans Condensed','Liberation Sans',sans-serif;font-weight:bold;color:#141414;transform:scaleX(0.949);">MODO</span>
<div class="btn" style="left:928px;top:837px;width:109px;height:22px;"></div>
<span class="t" style="left:951.9px;top:843.59px;font-size:11.6px;font-family:'DejaVu Sans Condensed','Liberation Sans',sans-serif;font-weight:bold;color:#16168c;transform:scaleX(1.068);">SIMULA.</span>
<div class="tag" style="left:1017px;top:840px;width:16px;height:12px;"></div>
<span class="t" style="left:1018.8px;top:840.24px;font-size:10px;color:#05646e;transform:scaleX(0.685);-webkit-text-stroke:0.3px #05646e;">F10</span>
<div class="a" style="left:928px;top:861px;width:109px;height:30px;background:#bababa;border:1px solid #909090;border-top-color:#d8d8d8;border-left-color:#d8d8d8;box-shadow:inset 1px 1px 0 #cacaca,inset -1px -1px 0 #a2a2a2"></div>
<span class="t" style="left:944px;top:875.69px;font-size:11.6px;font-family:'DejaVu Sans Condensed','Liberation Sans',sans-serif;font-weight:bold;color:#16168c;transform:scaleX(1.064);">ACTIVO ON</span>
<div class="tag" style="left:1017px;top:864px;width:14px;height:12px;"></div>
<span class="t" style="left:1018.8px;top:864.24px;font-size:10px;color:#05646e;transform:scaleX(0.594);-webkit-text-stroke:0.3px #05646e;">F11</span>
<div class="btn" style="left:1040px;top:858px;width:108px;height:33px;"></div>
<span class="t" style="left:1059.4px;top:871.52px;font-size:12.5px;color:#e63434;transform:scaleX(0.893);">REPLANTEO</span>
<div class="tag" style="left:1125px;top:863px;width:18px;height:12px;"></div>
<span class="t" style="left:1126.8px;top:863.24px;font-size:10px;color:#05646e;transform:scaleX(0.801);-webkit-text-stroke:0.3px #05646e;">F12</span>
<span class="t" style="left:1073.1px;top:839.39px;font-size:11px;color:#2a2a2a;transform:scaleX(0.925);">3P / 4P</span>
<div class="a" style="left:1111px;top:836px;width:30px;height:14px;background:linear-gradient(90deg,#d6d6d6 0,#d6d6d6 14px,#7c7c7c 14px);border:1px solid #8a8a8a"></div>
<div class="a" style="left:1116px;top:837px;width:1px;height:12px;background:#9a9a9a"></div>
<div class="a" style="left:1121px;top:837px;width:1px;height:12px;background:#9a9a9a"></div>
<div class="grp" style="left:1170px;top:820px;width:181px;height:73px;"></div>
<div class="btn" style="left:1174px;top:824px;width:87px;height:30px;"></div>
<span class="t" style="left:1182.5px;top:834.92px;font-size:12.5px;color:#2424c4;transform:scaleX(0.975);">SALVA</span>
<div class="tag" style="left:1228px;top:828px;width:25px;height:14px;"></div>
<span class="t" style="left:1229.8px;top:829.33px;font-size:10px;color:#05646e;transform:scaleX(0.860);-webkit-text-stroke:0.3px #05646e;">S+F1</span>
<div class="btn" style="left:1174px;top:856px;width:87px;height:32px;"></div>
<span class="t" style="left:1182.5px;top:867.72px;font-size:12.5px;color:#2424c4;transform:scaleX(0.886);">CARGA</span>
<div class="tag" style="left:1228px;top:862px;width:25px;height:14px;"></div>
<span class="t" style="left:1229.8px;top:863.33px;font-size:10px;color:#05646e;transform:scaleX(0.860);-webkit-text-stroke:0.3px #05646e;">S+F2</span>
<div class="btn" style="left:1272px;top:829px;width:65px;height:22px;"></div>
<span class="t" style="left:1284.4px;top:834.92px;font-size:12.5px;color:#1a1a1a;transform:scaleX(1.024);">Ajustes</span>
<div class="btn" style="left:1266px;top:857px;width:77px;height:31px;"></div>
<span class="t" style="left:1295.6px;top:866.72px;font-size:12.5px;color:#e63434;transform:scaleX(0.894);">FIN</span>
<svg class="a" style="left:836px;top:1009px" width="10" height="10" viewBox="836 1009 10 10"><path d="M840.4 1010.2Q842 1009.6 842.9 1010.8L843 1013.4L842 1015.8L841.6 1019H837.9L838.5 1015.6L839.2 1012.2z" fill="#05050f"/></svg>
</div>
</body>
</html>
